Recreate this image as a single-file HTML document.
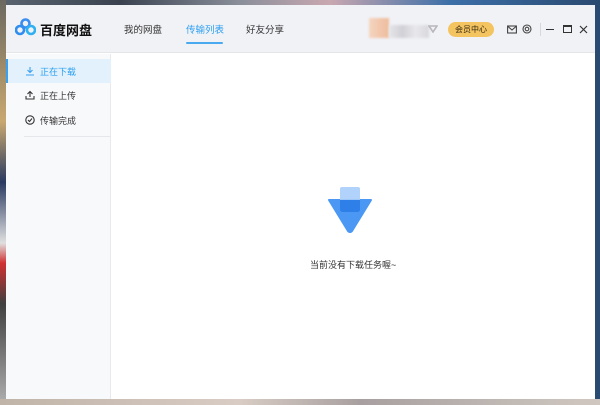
<!DOCTYPE html>
<html><head><meta charset="utf-8"><style>
*{margin:0;padding:0;box-sizing:border-box}
body{width:600px;height:405px;overflow:hidden;position:relative;font-family:"Liberation Sans","Noto Sans CJK SC",sans-serif;
background:linear-gradient(90deg,#5a6470 0%,#3a4250 20%,#8a8f9a 40%,#c9a8b0 55%,#3c6fa8 75%,#2a4a70 100%);}
.bgb{position:absolute;left:0;top:399px;width:600px;height:6px;background:linear-gradient(90deg,#c0b4a8,#d8ccc4 40%,#a8a0a0 60%,#d0c8c0);}
.bgl{position:absolute;left:0;top:0;width:6px;height:405px;background:linear-gradient(180deg,#6a6860 0%,#c8a870 30%,#2a3a60 45%,#e0e0e0 60%,#d03030 65%,#404040 75%,#b0b0b0 100%);}
.win{position:absolute;left:6px;top:5px;width:589px;height:394px;background:#fff;}
.hdr{position:absolute;left:0;top:0;width:589px;height:48px;background:#f1f2f6;border-bottom:1px solid #e4e6ea;}
.side{position:absolute;left:0;top:49px;width:105px;height:345px;background:#f8f9fb;border-right:1px solid #e8e9ec;}
.t{position:absolute;font-size:9.5px;color:#333;white-space:nowrap}
.item{position:absolute;left:0;width:105px;height:24px;}
.item span{position:absolute;left:34px;top:6px;font-size:9px;color:#333}
</style></head><body>
<div class="bgl"></div><div class="bgb"></div>
<div class="win">
 <div class="hdr">
  <svg style="position:absolute;left:9px;top:13px" width="21" height="18" viewBox="0 0 21 18">
   <circle cx="10.5" cy="5.5" r="4" fill="none" stroke="#3a8ef0" stroke-width="2.6"/>
   <circle cx="5" cy="12" r="4" fill="none" stroke="#2f8ef0" stroke-width="2.6"/>
   <circle cx="16" cy="12" r="4" fill="none" stroke="#2fb0f0" stroke-width="2.6"/>
  </svg>
  <div class="t" style="left:34px;top:15px;font-size:13px;font-weight:bold;color:#111">百度网盘</div>
  <div class="t" style="left:118px;top:17px">我的网盘</div>
  <div class="t" style="left:180px;top:17px;color:#2a9ff0">传输列表</div>
  <div style="position:absolute;left:180px;top:37px;width:37px;height:2px;background:#4aaaf0;border-radius:1px"></div>
  <div class="t" style="left:240px;top:17px">好友分享</div>
  <div style="position:absolute;left:363px;top:13px;width:20px;height:20px;background:linear-gradient(90deg,#f4d4c0,#eebc9c);filter:blur(1px)"></div>
  <div style="position:absolute;left:383px;top:20px;width:40px;height:13px;background:linear-gradient(90deg,#e6e6ea,#d0d0d6,#e8e8ec,#d8d8dc);filter:blur(1px)"></div>
  <svg style="position:absolute;left:422px;top:20px" width="10" height="8" viewBox="0 0 10 8"><path d="M1 1H9L5 7Z" fill="none" stroke="#b8b8bc" stroke-width="1.6"/></svg>
  <div style="position:absolute;left:442px;top:17px;width:46px;height:15px;border-radius:8px;background:#f3c460;font-size:8px;line-height:15px;text-align:center;color:#3a2a10">会员中心</div>
  <svg style="position:absolute;left:501px;top:20px" width="10" height="9" viewBox="0 0 10 9"><rect x="0.6" y="1" width="8.8" height="7" fill="none" stroke="#444" stroke-width="1.1"/><path d="M1 1.5L5 5 9 1.5" fill="none" stroke="#444" stroke-width="1.1"/></svg>
  <svg style="position:absolute;left:516px;top:19px" width="10" height="10" viewBox="0 0 10 10"><circle cx="5" cy="5" r="4" fill="none" stroke="#444" stroke-width="1.1"/><circle cx="5" cy="5" r="1.8" fill="none" stroke="#444" stroke-width="1.1"/></svg>
  <div style="position:absolute;left:534px;top:18px;width:1px;height:13px;background:#d8d8dc"></div>
  <div style="position:absolute;left:540px;top:24px;width:8px;height:1.2px;background:#333"></div>
  <div style="position:absolute;left:557px;top:20px;width:9px;height:8px;border:1.2px solid #333;border-top-width:2px"></div>
  <svg style="position:absolute;left:573px;top:20px" width="9" height="9" viewBox="0 0 9 9"><path d="M1 1L8 8M8 1L1 8" stroke="#333" stroke-width="1.2"/></svg>
 </div>
 <div class="side">
  <div class="item" style="top:5px;background:#e3f1fc"><div style="position:absolute;left:0;top:0;width:2px;height:24px;background:#3aa0f0"></div>
   <svg style="position:absolute;left:19px;top:7px" width="10" height="10" viewBox="0 0 10 10"><path d="M5 1V6M2.5 4L5 6.5 7.5 4M1 9H9" fill="none" stroke="#3aa0f0" stroke-width="1.1"/></svg>
   <span style="color:#2a9ff0">正在下载</span></div>
  <div class="item" style="top:29px">
   <svg style="position:absolute;left:19px;top:7px" width="10" height="10" viewBox="0 0 10 10"><path d="M5 7V2M2.5 4L5 1.5 7.5 4M1 6V9H9V6" fill="none" stroke="#333" stroke-width="1.1"/></svg>
   <span>正在上传</span></div>
  <div class="item" style="top:54px">
   <svg style="position:absolute;left:19px;top:7px" width="10" height="10" viewBox="0 0 10 10"><circle cx="5" cy="5" r="4.2" fill="none" stroke="#333" stroke-width="1.1"/><path d="M3 5L4.5 6.5 7 3.5" fill="none" stroke="#333" stroke-width="1.1"/></svg>
   <span>传输完成</span></div>
  <div style="position:absolute;left:18px;top:82px;width:86px;height:1px;background:#e6e7ea"></div>
 </div>
 <svg style="position:absolute;left:321px;top:182px" width="46" height="46" viewBox="0 0 46 46">
  <path d="M2 13H44L25 44Q23 46 21 44Z" fill="#4a98f4" stroke="#4a98f4" stroke-width="2" stroke-linejoin="round"/>
  <rect x="13" y="0" width="20" height="25" rx="2" fill="#a8cdfa" opacity="0.9"/>
  <path d="M13 13H33V23Q33 25 31 25H15Q13 25 13 23Z" fill="#2f7fe8"/>
 </svg>
 <div class="t" style="left:304px;top:253px;font-size:9px;color:#333">当前没有下载任务喔~</div>
</div>
</body></html>
